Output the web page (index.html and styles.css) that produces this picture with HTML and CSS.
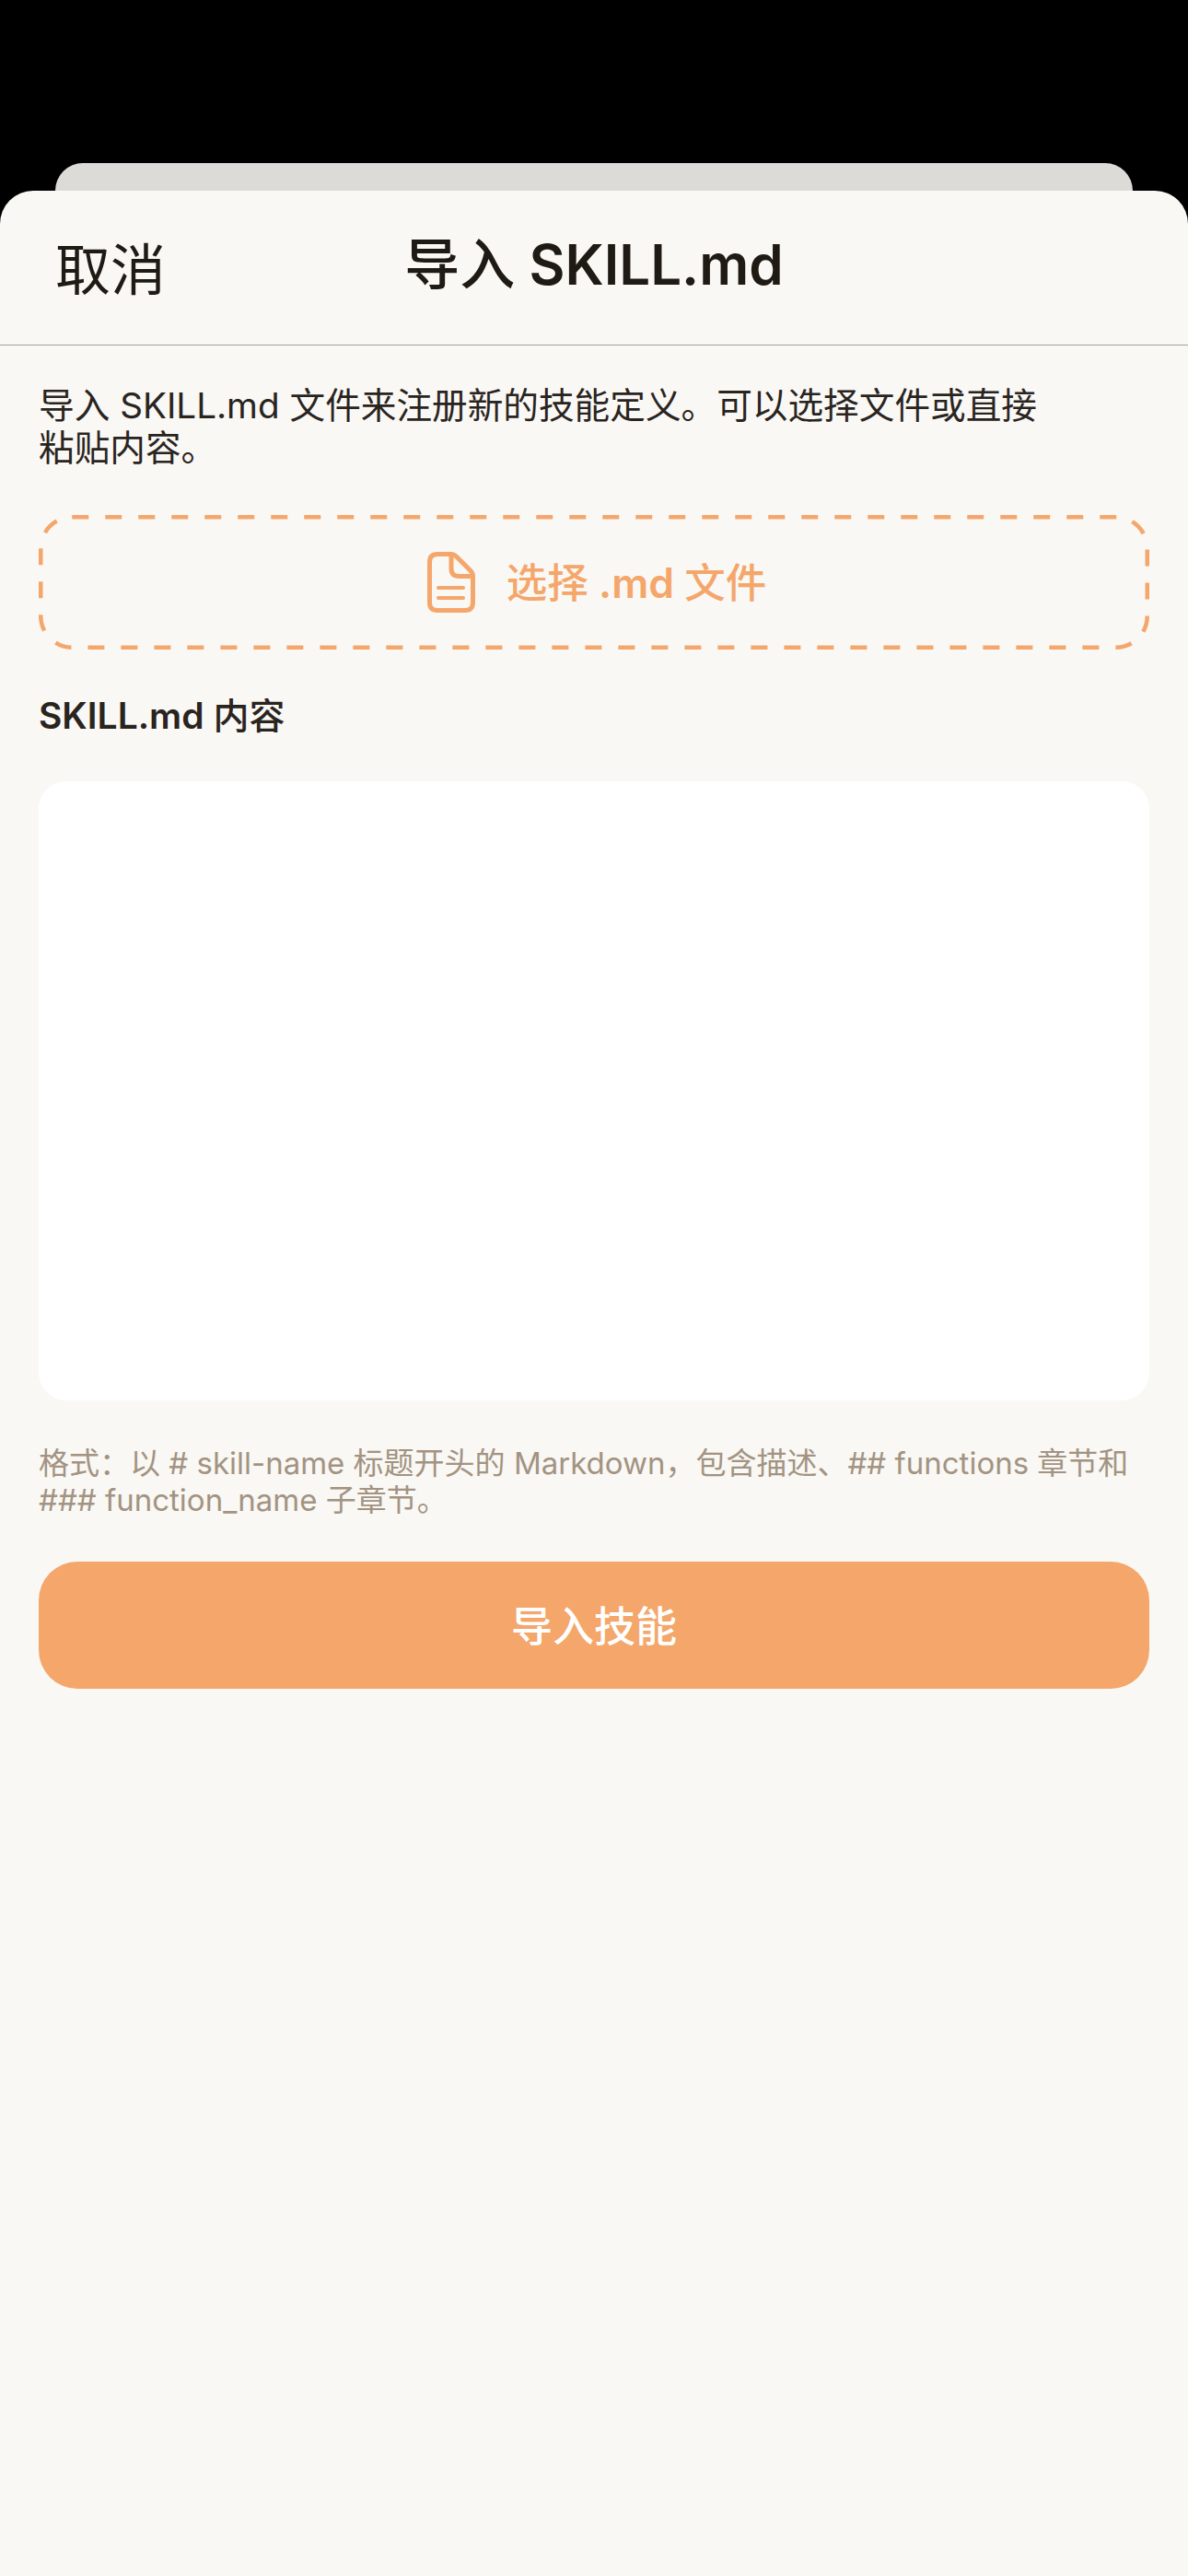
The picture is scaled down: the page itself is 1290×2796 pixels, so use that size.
FILE: index.html
```html
<!DOCTYPE html>
<html lang="zh-CN">
  <head>
    <meta charset="UTF-8" />
    <title>导入 SKILL.md</title>
    <link rel="stylesheet" href="styles.css">
  </head>
  <body>
    <div class="back-card"></div>
    <main class="sheet">
      <header class="sheet-header">
        <a class="cancel">取消</a>
        <h1 class="sheet-title"><span class="cjk">导入</span> SKILL.md</h1>
      </header>
      <section class="sheet-body">
        <p class="intro">导入 SKILL.md 文件来注册新的技能定义。可以选择文件或直接粘贴内容。</p>
        <button class="file-picker" type="button">
          <svg class="dash-border" viewBox="0 0 1206 146" fill="none" stroke="currentColor" stroke-width="4.5" stroke-dasharray="18 18">
            <rect x="2.25" y="2.25" width="1201.5" height="141.5" rx="34" />
          </svg>
          <svg class="file-icon" viewBox="0 0 52 66" fill="none" stroke="currentColor" stroke-width="5" stroke-linecap="round" stroke-linejoin="round">
            <path d="M11 2.500h15c2 0 3.500.6 5 2l16.500 16.500c1.400 1.400 2 3 2 5V55c0 5.500-3 8.500-8.500 8.500H11c-5.500 0-8.500-3-8.500-8.500V11c0-5.500 3-8.500 8.500-8.500z" />
            <path d="M26 2.500V18c0 5.500 3 8.500 8.500 8.500h15" />
            <path d="M12 39h27M12 50h27" stroke-width="4" />
          </svg>
          <span class="file-label"><span class="cjk">选择</span> .md <span class="cjk">文件</span></span>
        </button>
        <label class="field-label" for="content">SKILL.md <span class="cjk">内容</span></label>
        <textarea class="content-box" id="content"></textarea>
        <p class="hint">格式：以 # skill-name 标题开头的 Markdown，包含描述、## functions 章节和 ### function_name 子章节。</p>
        <button class="submit" type="button">导入技能</button>
      </section>
    </main>
  </body>
</html>
```

FILE: styles.css
```css
/* Hoja modal sobre fondo negro */
html,
body {
  margin: 0;
  height: 2796px;
  overflow: hidden;
}
body {
  background-color: #000;
  font-family: Inter, "Noto Sans CJK SC", sans-serif;
  color: #1f1a14;
  padding-top: 177px;
  box-sizing: border-box;
}
.cjk {
  font-weight: 500;
}
.back-card {
  height: 30px;
  margin: 0 60px;
  background-color: #dcdbd7;
  border-radius: 30px 30px 0 0;
}
.sheet {
  height: 2589px;
  background-color: #f9f8f4;
  border-radius: 36px 36px 0 0;
}
.sheet-header {
  height: 167px;
  border-bottom: 1px solid #a3a09a;
  position: relative;
  display: flex;
  align-items: center;
  justify-content: center;
}
.cancel {
  position: absolute;
  left: 60px;
  top: 53px;
  font-size: 60px;
  line-height: 66px;
}
.sheet-title {
  margin: 0 0 8px;
  font-size: 60px;
  font-weight: 600;
  line-height: 66px;
}
.sheet-body {
  padding: 42px 42px 0;
  display: flex;
  flex-direction: column;
}
.intro {
  margin: 0;
  width: 1100px;
  font-size: 38.65px;
  line-height: 46px;
  color: #2a241f;
}
.file-picker {
  height: 146px;
  margin-top: 50px;
  padding: 0 0 0 6px;
  border: 0;
  position: relative;
  background: none;
  color: #f4a66b;
  font-family: inherit;
  font-size: 44.5px;
  font-weight: 600;
  display: flex;
  align-items: center;
  justify-content: center;
  gap: 34px;
}
.dash-border {
  position: absolute;
  top: 0;
  left: 0;
  width: 100%;
  height: 100%;
}
.file-icon {
  width: 52px;
  height: 66px;
}
.file-label {
  margin-bottom: 5px;
}
.field-label {
  margin-top: 49px;
  font-size: 39px;
  font-weight: 600;
  line-height: 46px;
  color: #2a241f;
}
.content-box {
  box-sizing: border-box;
  height: 672px;
  margin-top: 48px;
  border: 0;
  border-radius: 30px;
  background-color: #fff;
  resize: none;
}
.hint {
  margin: 48px 0 0;
  font-size: 33px;
  line-height: 40px;
  color: #a39382;
}
.submit {
  height: 138px;
  margin-top: 47px;
  padding: 0 0 4px;
  border: 0;
  border-radius: 42px;
  background-color: #f4a66b;
  color: #fff;
  font-family: inherit;
  font-size: 45px;
  font-weight: 500;
}
```
